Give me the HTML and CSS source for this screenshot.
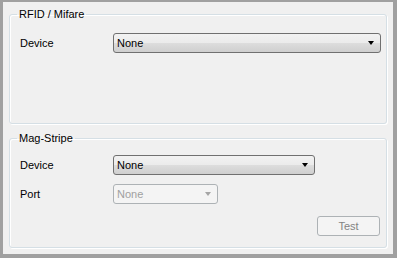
FILE: index.html
```html
<!DOCTYPE html>
<html lang="en">
<head>
  <meta charset="UTF-8">
  <title>Reader Settings</title>
  <link rel="stylesheet" href="styles.css">
</head>
<body>
  <div class="window">
    <fieldset class="group group-rfid">
      <legend>RFID / Mifare</legend>
      <div class="row">
        <label class="label">Device</label>
        <div class="combo combo-wide"><span>None</span><i class="arrow"></i></div>
      </div>
    </fieldset>

    <fieldset class="group group-mag">
      <legend>Mag-Stripe</legend>
      <div class="row">
        <label class="label">Device</label>
        <div class="combo combo-mid"><span>None</span><i class="arrow"></i></div>
      </div>
      <div class="row row-port">
        <label class="label">Port</label>
        <div class="combo combo-small disabled"><span>None</span><i class="arrow"></i></div>
      </div>
      <div class="actions">
        <button class="btn" disabled>Test</button>
      </div>
    </fieldset>
  </div>
</body>
</html>
```

FILE: styles.css
```css
* { box-sizing: border-box; margin: 0; padding: 0; }

body {
  width: 397px; height: 258px; overflow: hidden;
  background: #a0a0a0;
  font-family: 'Liberation Sans', Arial, sans-serif; font-size: 11px; color: #000;
  padding: 2px 4px 4px 3px;
}

.window {
  width: 390px; height: 252px; background: #f0f0f0;
  padding: 6px 6px 0 6px;
}

.group {
  height: 116px; border: 1px solid #d5dfe5; border-radius: 3px;
  box-shadow: inset 1px 1px 0 #fff, 1px 1px 0 #fff;
  padding: 0 5px 0 10px; min-width: 0;
}
.group + .group { margin-top: 8px; }

.group legend {
  margin-left: -3px; padding: 0 2px 0 2px; line-height: 13px; color: #000;
}

.row { display: flex; align-items: center; height: 20px; }
.group-rfid .row { margin-top: 12px; }
.group-mag .row:first-of-type { margin-top: 10px; }
.row-port { margin-top: 9px; }

.label { width: 93px; line-height: 13px; }

.combo {
  height: 20px; border: 1px solid #707070; border-radius: 3px;
  background: linear-gradient(#f2f2f2, #ebebeb 50%, #dddddd 51%, #cfcfcf);
  display: flex; align-items: center; justify-content: space-between;
  padding: 0 5px 0 3px;
}
.combo-wide { width: 268px; }
.combo-mid { width: 202px; }
.combo-small { width: 105px; }

.arrow {
  width: 0; height: 0; border-left: 3.5px solid transparent; border-right: 3.5px solid transparent;
  border-top: 4px solid #000; margin-right: 1px;
}

.combo.disabled {
  background: #f4f4f4; border-color: #adb2b5; color: #a0a0a0;
}
.combo.disabled .arrow { border-top-color: #a5a5a5; }

.actions { display: flex; justify-content: flex-end; margin-top: 12px; }

.btn {
  width: 63px; height: 20px; border: 1px solid #adb2b5; border-radius: 3px;
  background: #f4f4f4; color: #838383;
  font-family: inherit; font-size: 11px; margin-right: 1px;
}
```
